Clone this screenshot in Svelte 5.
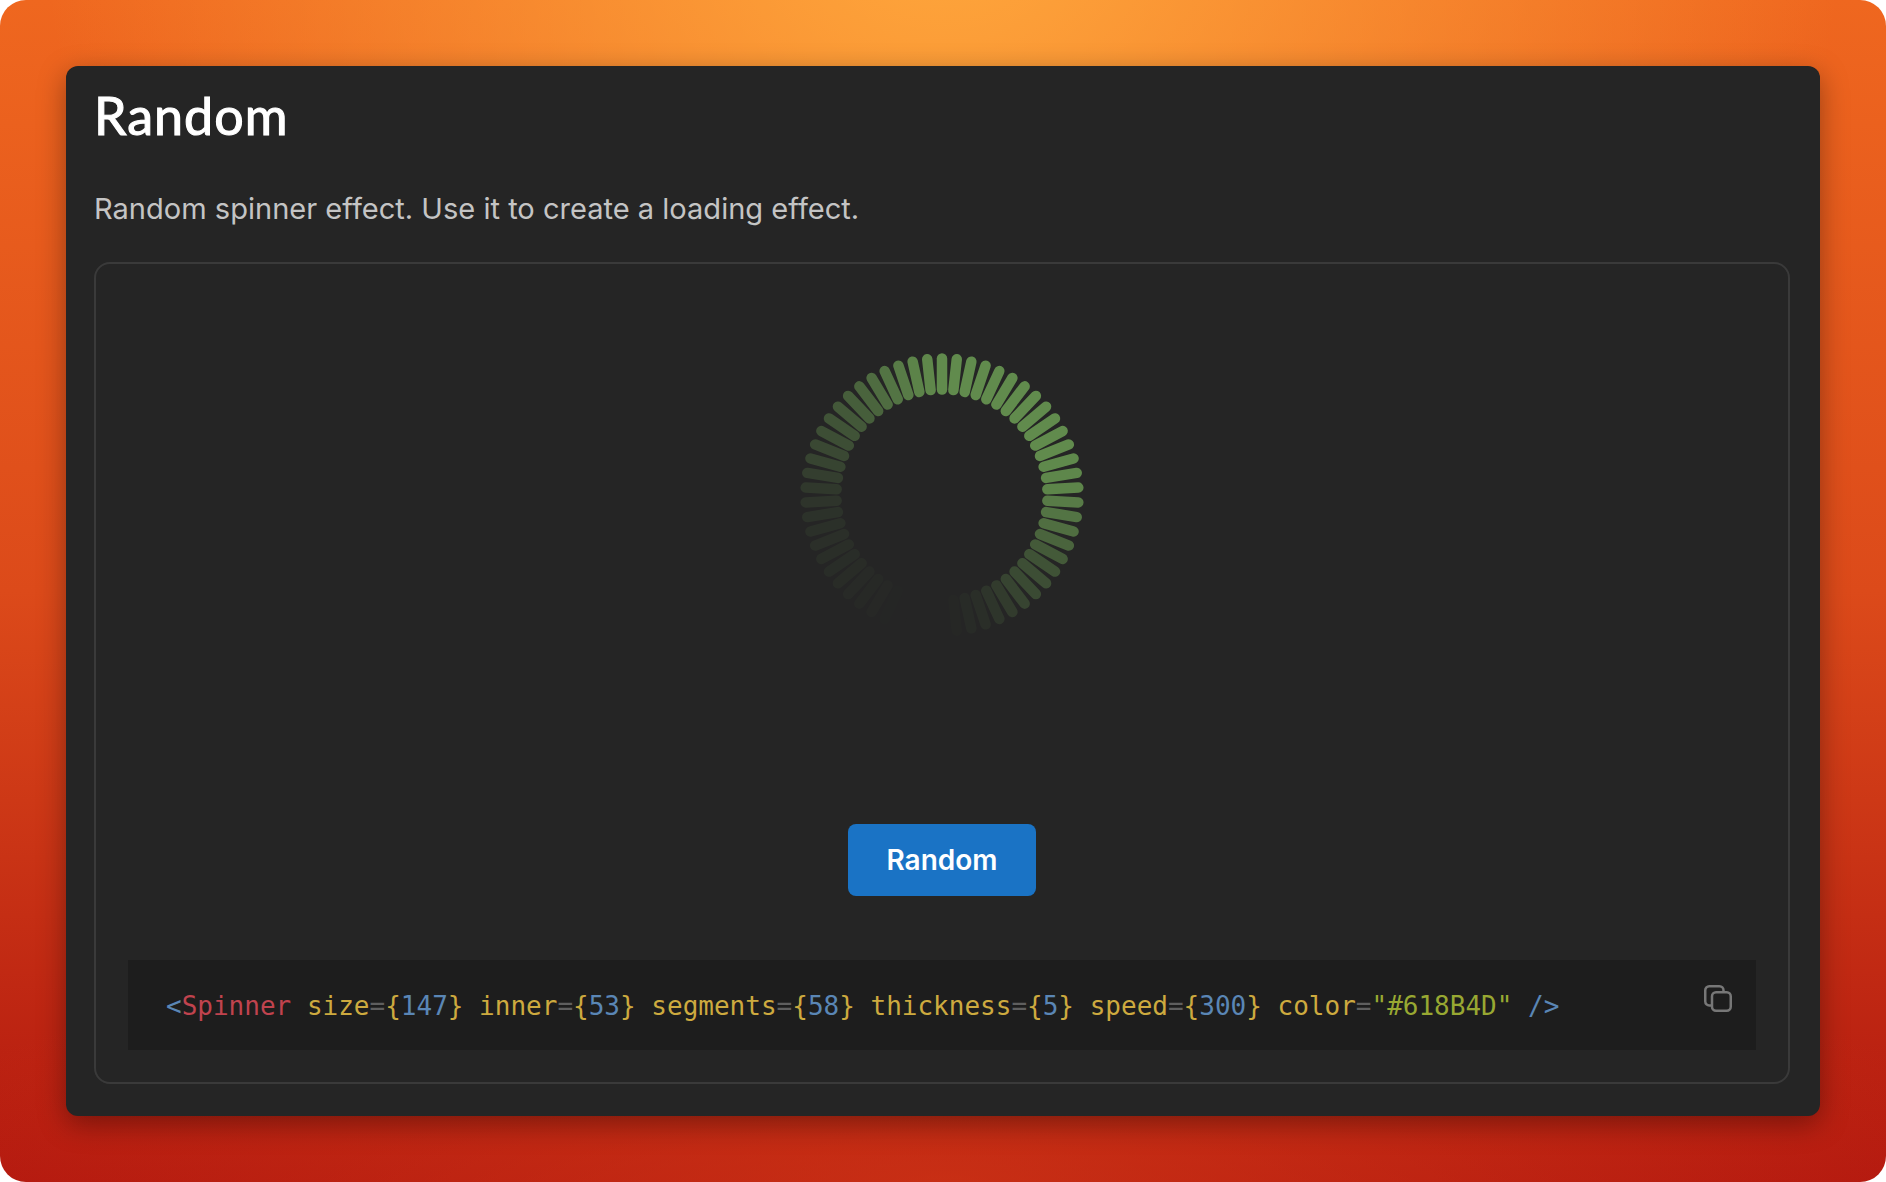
<script>
	const size = 290;
	const center = size / 2;
	const segmentCount = 58;
	// opacity of each segment, clockwise from the top one
	const levels = [
		1, 1, 1, 1, 1, 1, 1, 1, 1, 1, 1, 1, 0.98, 0.96, 0.94, 0.85, 0.78, 0.72, 0.62, 0.52, 0.44, 0.4, 0.36, 0.3,
		0.22, 0.16, 0.09, 0.06, 0.02, 0, 0, 0, 0.005, 0.01, 0.03, 0.04, 0.05, 0.07, 0.08, 0.09, 0.1, 0.11, 0.13,
		0.15, 0.19, 0.25, 0.3, 0.35, 0.4, 0.45, 0.5, 0.56, 0.62, 0.7, 0.78, 0.85, 0.92, 0.97
	];

	const segments = levels.slice(0, segmentCount).map((opacity, i) => {
		const angle = (i * 2 * Math.PI) / segmentCount;
		const sin = Math.sin(angle);
		const cos = Math.cos(angle);
		return {
			x1: center + 105.5 * sin,
			y1: center - 105.5 * cos,
			x2: center + 136.5 * sin,
			y2: center - 136.5 * cos,
			opacity
		};
	});
</script>

<div class="page">
	<main class="panel">
		<h1>Random</h1>
		<p class="lead">Random spinner effect. Use it to create a loading effect.</p>

		<section class="demo">
			<svg class="spinner" width={size} height={size} viewBox="0 0 {size} {size}" aria-hidden="true">
				{#each segments as s}
					<line x1={s.x1} y1={s.y1} x2={s.x2} y2={s.y2} opacity={s.opacity} />
				{/each}
			</svg>

			<button class="random">Random</button>

			<div class="code">
				<code><span class="blue">&lt;</span><span class="red">Spinner</span> <span class="yellow">size</span><span class="grey">=</span><span class="yellow">{'{'}</span><span class="blue">147</span><span class="yellow">{'}'}</span> <span class="yellow">inner</span><span class="grey">=</span><span class="yellow">{'{'}</span><span class="blue">53</span><span class="yellow">{'}'}</span> <span class="yellow">segments</span><span class="grey">=</span><span class="yellow">{'{'}</span><span class="blue">58</span><span class="yellow">{'}'}</span> <span class="yellow">thickness</span><span class="grey">=</span><span class="yellow">{'{'}</span><span class="blue">5</span><span class="yellow">{'}'}</span> <span class="yellow">speed</span><span class="grey">=</span><span class="yellow">{'{'}</span><span class="blue">300</span><span class="yellow">{'}'}</span> <span class="yellow">color</span><span class="grey">=</span><span class="green">"#618B4D"</span> <span class="blue">/&gt;</span></code>
				<svg class="copy" width="28" height="27" viewBox="0 0 28 27" fill="none" aria-label="Copy">
					<path d="M8 20.5 H5.5 A4 4 0 0 1 1.25 16.5 V5.25 A4 4 0 0 1 5.25 1.25 H15.5 A4 4 0 0 1 19.5 5.25 V7" />
					<rect x="8" y="7.25" width="18.75" height="18.5" rx="4" />
				</svg>
			</div>
		</section>
	</main>
</div>

<style>
	:global(body) {
		background: #fff;
	}

	.page {
		box-sizing: border-box;
		width: 1886px;
		height: 1182px;
		padding: 66px;
		border-radius: 26px;
		background:
			radial-gradient(ellipse 1250px 1180px at 50% -8%, #ffa93d 0%, rgba(255, 169, 61, 0) 72%),
			radial-gradient(ellipse 1100px 260px at 50% 100%, rgba(214, 62, 24, 0.6) 0%, rgba(214, 62, 24, 0) 100%),
			linear-gradient(180deg, #ef671f 0%, #dc4a1a 50%, #b2170f 100%);
		font-family: Inter, sans-serif;
	}

	.panel {
		box-sizing: border-box;
		height: 1050px;
		padding: 18px 30px 32px 28px;
		border-radius: 12px;
		background: #252525;
		box-shadow: 0 8px 28px rgba(0, 0, 0, 0.36);
	}

	h1 {
		margin: 0;
		font-family: Lato, sans-serif;
		font-size: 52px;
		font-weight: 400;
		letter-spacing: 1px;
		line-height: 62px;
		-webkit-text-stroke: 1.1px #fff;
		color: #fff;
	}

	.lead {
		margin: 44px 0 0;
		font-size: 29.05px;
		line-height: 38px;
		color: #c4c4c4;
	}

	.demo {
		box-sizing: border-box;
		display: flex;
		flex-direction: column;
		align-items: center;
		height: 822px;
		margin-top: 34px;
		padding: 86px 32px 32px;
		border: 2px solid #3a3a3a;
		border-radius: 16px;
	}

	.spinner {
		flex: none;
	}

	.spinner line {
		stroke: #618b4d;
		stroke-width: 10.5;
		stroke-linecap: round;
	}

	.random {
		width: 188px;
		height: 72px;
		margin-top: 184px;
		border: none;
		border-radius: 8px;
		background: #1a73c5;
		font-family: Inter, sans-serif;
		font-size: 28px;
		font-weight: 600;
		color: #fff;
	}

	.code {
		position: relative;
		box-sizing: border-box;
		width: 100%;
		height: 91px;
		margin-top: 64px;
		padding: 3px 38px 0;
		display: flex;
		align-items: center;
		background: #1d1d1d;
	}

	code {
		font-family: 'DejaVu Sans Mono', monospace;
		font-size: 26px;
		white-space: pre;
	}

	.blue {
		color: #5a86b5;
	}
	.red {
		color: #c0434e;
	}
	.yellow {
		color: #cdaa3f;
	}
	.grey {
		color: #5f5f5f;
	}
	.green {
		color: #98a832;
	}

	.copy {
		position: absolute;
		top: 25px;
		right: 24px;
	}

	.copy path,
	.copy rect {
		stroke: #777;
		stroke-width: 2.5;
	}
</style>
